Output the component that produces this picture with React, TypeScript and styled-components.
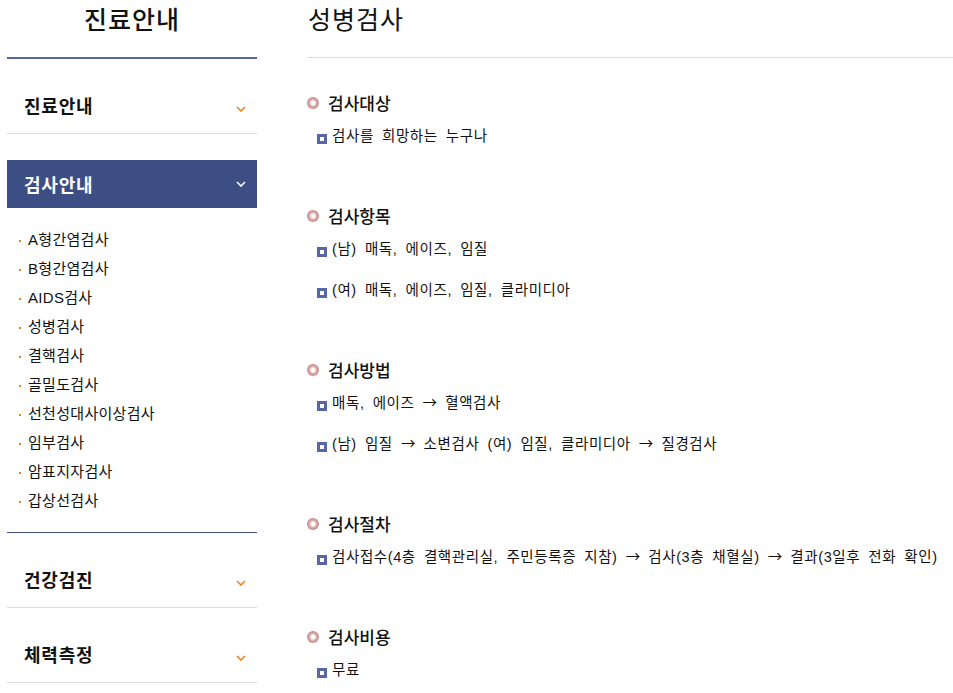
import React from "react";
import styled, { createGlobalStyle } from "styled-components";

const GlobalStyle = createGlobalStyle`
  html, body {
    margin: 0;
    padding: 0;
    background: #ffffff;
  }
  body {
    font-family: "Liberation Sans", "Noto Sans CJK KR", sans-serif;
    color: #111111;
  }
  ul { margin: 0; padding: 0; list-style: none; }
`;

const Page = styled.div`
  display: flex;
  gap: 50px;
  padding: 0 0 0 7px;
  width: 953px;
  box-sizing: border-box;
`;

const Sidebar = styled.aside`
  width: 250px;
  flex: 0 0 250px;
`;

const SideTitle = styled.h2`
  margin: 0;
  height: 59px;
  box-sizing: border-box;
  padding-bottom: 23px;
  line-height: 36px;
  font-size: 25px;
  font-weight: 500;
  letter-spacing: 1px;
  text-align: center;
  color: #111;
  border-bottom: 2px solid #5468a8;
  font-family: "Noto Sans CJK KR", sans-serif;
`;

const MenuItem = styled.li<{ $open?: boolean }>`
  padding-top: 26px;
  border-bottom: ${(p) => (p.$open ? "1px solid #3c4e83" : "1px solid #dddddd")};
`;

const MenuLink = styled.div<{ $active?: boolean }>`
  height: 48px;
  box-sizing: border-box;
  display: flex;
  align-items: center;
  justify-content: space-between;
  padding: 0 11px 0 17px;
  background: ${(p) => (p.$active ? "#3c4e83" : "transparent")};
  color: ${(p) => (p.$active ? "#ffffff" : "#111111")};
  font-family: "Noto Sans CJK KR", sans-serif;
  font-size: 18px;
  font-weight: 700;
  letter-spacing: 0.8px;
`;

const MenuLabel = styled.span<{ $active?: boolean }>`
  padding-bottom: ${(p) => (p.$active ? "0" : "8px")};
`;

const SubMenu = styled.ul`
  padding: 16px 0 18px 12px;
`;

const SubItem = styled.li`
  display: flex;
  align-items: center;
  height: 29px;
  font-size: 15px;
  color: #111;
  letter-spacing: 0.3px;
`;

const SubDot = styled.span`
  width: 2px;
  height: 2px;
  background: #e8821e;
  margin: 4px 7px 0 0;
  flex: 0 0 auto;
`;

const Main = styled.main`
  flex: 1;
`;

const PageTitle = styled.h1`
  margin: 0;
  height: 58px;
  box-sizing: border-box;
  padding: 0 0 21px 1px;
  line-height: 36px;
  font-size: 25px;
  font-weight: 400;
  letter-spacing: 1px;
  color: #111;
  border-bottom: 1px solid #dddddd;
  font-family: "Noto Sans CJK KR", sans-serif;
`;

const Content = styled.div`
  padding-top: 32px;
  display: flex;
  flex-direction: column;
  gap: 56px;
`;

const Section = styled.section`
  display: flex;
  flex-direction: column;
`;

const SectionHead = styled.h3`
  margin: 0 0 11px;
  height: 24px;
  display: flex;
  align-items: center;
  gap: 9px;
  font-size: 17px;
  font-weight: 500;
  color: #111;
  font-family: "Noto Sans CJK KR", sans-serif;
`;

const Ring = styled.span`
  width: 12px;
  height: 12px;
  border-radius: 50%;
  margin-top: 2px;
  background: radial-gradient(
    circle at 50% 50%,
    #ffffff 0 2px,
    #e8c4c4 2.8px,
    #d49c9c 4.5px,
    #c48a8a 6px
  );
  flex: 0 0 auto;
`;

const Items = styled.ul`
  display: flex;
  flex-direction: column;
  gap: 19px;
`;

const Item = styled.li`
  display: flex;
  align-items: flex-start;
  gap: 5px;
  height: 22px;
  padding-left: 10px;
  line-height: 22px;
  font-size: 14.5px;
  letter-spacing: 0.6px;
  word-spacing: 3.5px;
  color: #111;
  white-space: nowrap;
`;

const Arrow = styled.span`
  font-family: "Noto Sans CJK KR", sans-serif;
  letter-spacing: 0;
  line-height: 1;
`;

const Square = styled.span`
  width: 10px;
  height: 10px;
  box-sizing: border-box;
  border: 3px solid #5666a6;
  background: #fff;
  margin-top: 9px;
  flex: 0 0 auto;
`;

const Chevron = ({ color }: { color: string }) => (
  <svg width="10" height="6" viewBox="0 0 10 6" aria-hidden="true">
    <polyline points="1,1 5,5 9,1" fill="none" stroke={color} strokeWidth="1.6" />
  </svg>
);

const subs = [
  "A형간염검사",
  "B형간염검사",
  "AIDS검사",
  "성병검사",
  "결핵검사",
  "골밀도검사",
  "선천성대사이상검사",
  "임부검사",
  "암표지자검사",
  "갑상선검사",
];

const sections: { title: string; items: string[] }[] = [
  { title: "검사대상", items: ["검사를 희망하는 누구나"] },
  {
    title: "검사항목",
    items: ["(남) 매독, 에이즈, 임질", "(여) 매독, 에이즈, 임질, 클라미디아"],
  },
  {
    title: "검사방법",
    items: [
      "매독, 에이즈 → 혈액검사",
      "(남) 임질 → 소변검사 (여) 임질, 클라미디아 → 질경검사",
    ],
  },
  {
    title: "검사절차",
    items: [
      "검사접수(4층 결핵관리실, 주민등록증 지참) → 검사(3층 채혈실) → 결과(3일후 전화 확인)",
    ],
  },
  { title: "검사비용", items: ["무료"] },
];

const menu = [
  { label: "진료안내", active: false },
  { label: "검사안내", active: true },
  { label: "건강검진", active: false },
  { label: "체력측정", active: false },
];

const withArrows = (text: string) =>
  text.split("→").map((part, i) => (
    <React.Fragment key={i}>
      {i > 0 && <Arrow>→</Arrow>}
      {part}
    </React.Fragment>
  ));

export default function App() {
  return (
    <>
      <GlobalStyle />
      <Page>
        <Sidebar>
          <SideTitle>진료안내</SideTitle>
          <ul>
            {menu.map((m) => (
              <MenuItem key={m.label} $open={m.active}>
                <MenuLink $active={m.active}>
                  <MenuLabel $active={m.active}>{m.label}</MenuLabel>
                  <Chevron color={m.active ? "#ffffff" : "#e8821e"} />
                </MenuLink>
                {m.active && (
                  <SubMenu>
                    {subs.map((s) => (
                      <SubItem key={s}>
                        <SubDot />
                        {s}
                      </SubItem>
                    ))}
                  </SubMenu>
                )}
              </MenuItem>
            ))}
          </ul>
        </Sidebar>
        <Main>
          <PageTitle>성병검사</PageTitle>
          <Content>
            {sections.map((sec) => (
              <Section key={sec.title}>
                <SectionHead>
                  <Ring />
                  {sec.title}
                </SectionHead>
                <Items>
                  {sec.items.map((it) => (
                    <Item key={it}>
                      <Square />
                      <span>{withArrows(it)}</span>
                    </Item>
                  ))}
                </Items>
              </Section>
            ))}
          </Content>
        </Main>
      </Page>
    </>
  );
}
